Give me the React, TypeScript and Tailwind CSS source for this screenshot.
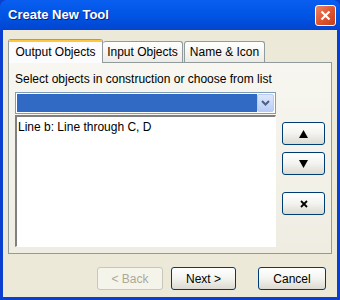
const font = { fontFamily: '"Liberation Sans", Arial, sans-serif' };

const XpButton = ({
  children,
  disabled,
  className = "",
}: {
  children: React.ReactNode;
  disabled?: boolean;
  className?: string;
}) => (
  <button
    className={
      "flex items-center justify-center rounded-[3px] border text-[12px] " +
      (disabled
        ? "border-[#c9c7ba] bg-[#f5f4ea] text-[#aca899] "
        : "border-[#003c74] bg-gradient-to-b from-[#ffffff] via-[#f3f3ef] to-[#dcdad0] text-black ") +
      className
    }>
    {children}
  </button>
);

const App = () => {
  return (
    <div
      className="flex h-[300px] w-[340px] flex-col bg-[#0a3fd0] text-black"
      style={font}>
      {/* title bar */}
      <div className="flex h-[30px] items-center justify-between rounded-t-[7px] bg-gradient-to-b from-[#0a5ef0] via-[#0055e5] to-[#0245cf] pl-[8px] pr-[4px]">
        <span className="text-[13px] font-bold text-white [text-shadow:1px_1px_0_#0a1f8a]">
          Create New Tool
        </span>
        <div className="flex h-[21px] w-[21px] items-center justify-center rounded-[3px] border border-white bg-gradient-to-br from-[#e8866a] via-[#e0552e] to-[#c3401c]">
          <svg width="11" height="11" viewBox="0 0 11 11">
            <path d="M1.5 1.5 L9.5 9.5 M9.5 1.5 L1.5 9.5" stroke="white" strokeWidth="2.2" />
          </svg>
        </div>
      </div>

      {/* body */}
      <div className="mx-[3px] mb-[3px] flex flex-1 flex-col bg-[#ece9d8] px-[5px] pt-[8px]">
        {/* tabs */}
        <div className="flex h-[24px] items-end">
          <div className="relative z-10 -mb-px flex h-[24px] w-[95px] items-center justify-center rounded-t-[3px] border border-b-0 border-[#919b9c] border-t-[#e68b2c] bg-[#fcfcfe] text-[12px]">
            <div className="absolute left-0 right-0 top-0 h-[2px] bg-[#ffc73c]" />
            Output Objects
          </div>
          <div className="flex h-[21px] w-[80px] items-center justify-center rounded-t-[3px] border border-b-0 border-l-0 border-[#919b9c] bg-gradient-to-b from-[#ffffff] to-[#ecebe6] text-[12px]">
            Input Objects
          </div>
          <div className="ml-[1px] flex h-[21px] w-[81px] items-center justify-center rounded-t-[3px] border border-b-0 border-[#919b9c] bg-gradient-to-b from-[#ffffff] to-[#ecebe6] text-[12px]">
            Name &amp; Icon
          </div>
        </div>

        {/* panel */}
        <div className="flex h-[192px] flex-col border border-[#919b9c] bg-gradient-to-b from-[#f7f6f0] to-[#efede2] pl-[6px] pr-[5px] pt-[9px]">
          <div className="text-[12px] leading-[14px]">
            Select objects in construction or choose from list
          </div>
          <div className="mt-[6px] flex">
            <div className="flex w-[261px] flex-col">
              <div className="flex h-[22px] border border-[#7f9db9] bg-white p-[1px]">
                <div className="flex-1 bg-[#316ac5]" />
                <div className="flex w-[17px] items-center justify-center rounded-[2px] border border-[#b8cbf2] bg-gradient-to-b from-[#dde7fc] to-[#b9cdf6]">
                  <svg width="9" height="6" viewBox="0 0 9 6">
                    <path d="M1 1 L4.5 4.5 L8 1" stroke="#4d6185" strokeWidth="2" fill="none" />
                  </svg>
                </div>
              </div>
              <div className="mt-[1px] h-[132px] border-l-2 border-t-2 border-b border-r border-l-[#808080] border-t-[#808080] border-b-[#ffffff] border-r-[#ffffff] bg-white pl-[1px] pt-[3px] text-[12px] leading-[14px]">
                Line b: Line through C, D
              </div>
            </div>
            <div className="ml-[6px] flex flex-col pt-[30px]">
              <XpButton className="h-[23px] w-[43px]">
                <svg width="9" height="8" viewBox="0 0 9 8">
                  <path d="M4.5 0 L9 8 L0 8 Z" fill="black" />
                </svg>
              </XpButton>
              <XpButton className="mt-[7px] h-[23px] w-[43px]">
                <svg width="9" height="8" viewBox="0 0 9 8">
                  <path d="M0 0 L9 0 L4.5 8 Z" fill="black" />
                </svg>
              </XpButton>
              <XpButton className="mt-[17px] h-[23px] w-[43px]">
                <svg width="8" height="8" viewBox="0 0 8 8">
                  <path d="M1 1 L7 7 M7 1 L1 7" stroke="black" strokeWidth="1.8" />
                </svg>
              </XpButton>
            </div>
          </div>
        </div>

        {/* footer */}
        <div className="flex flex-1 items-start pt-[13px]">
          <XpButton disabled className="ml-[89px] h-[23px] w-[66px]">
            &lt; Back
          </XpButton>
          <XpButton className="ml-[8px] h-[23px] w-[65px]">Next &gt;</XpButton>
          <XpButton className="ml-[22px] h-[23px] w-[68px]">Cancel</XpButton>
        </div>
      </div>
    </div>
  );
};

export default App;
